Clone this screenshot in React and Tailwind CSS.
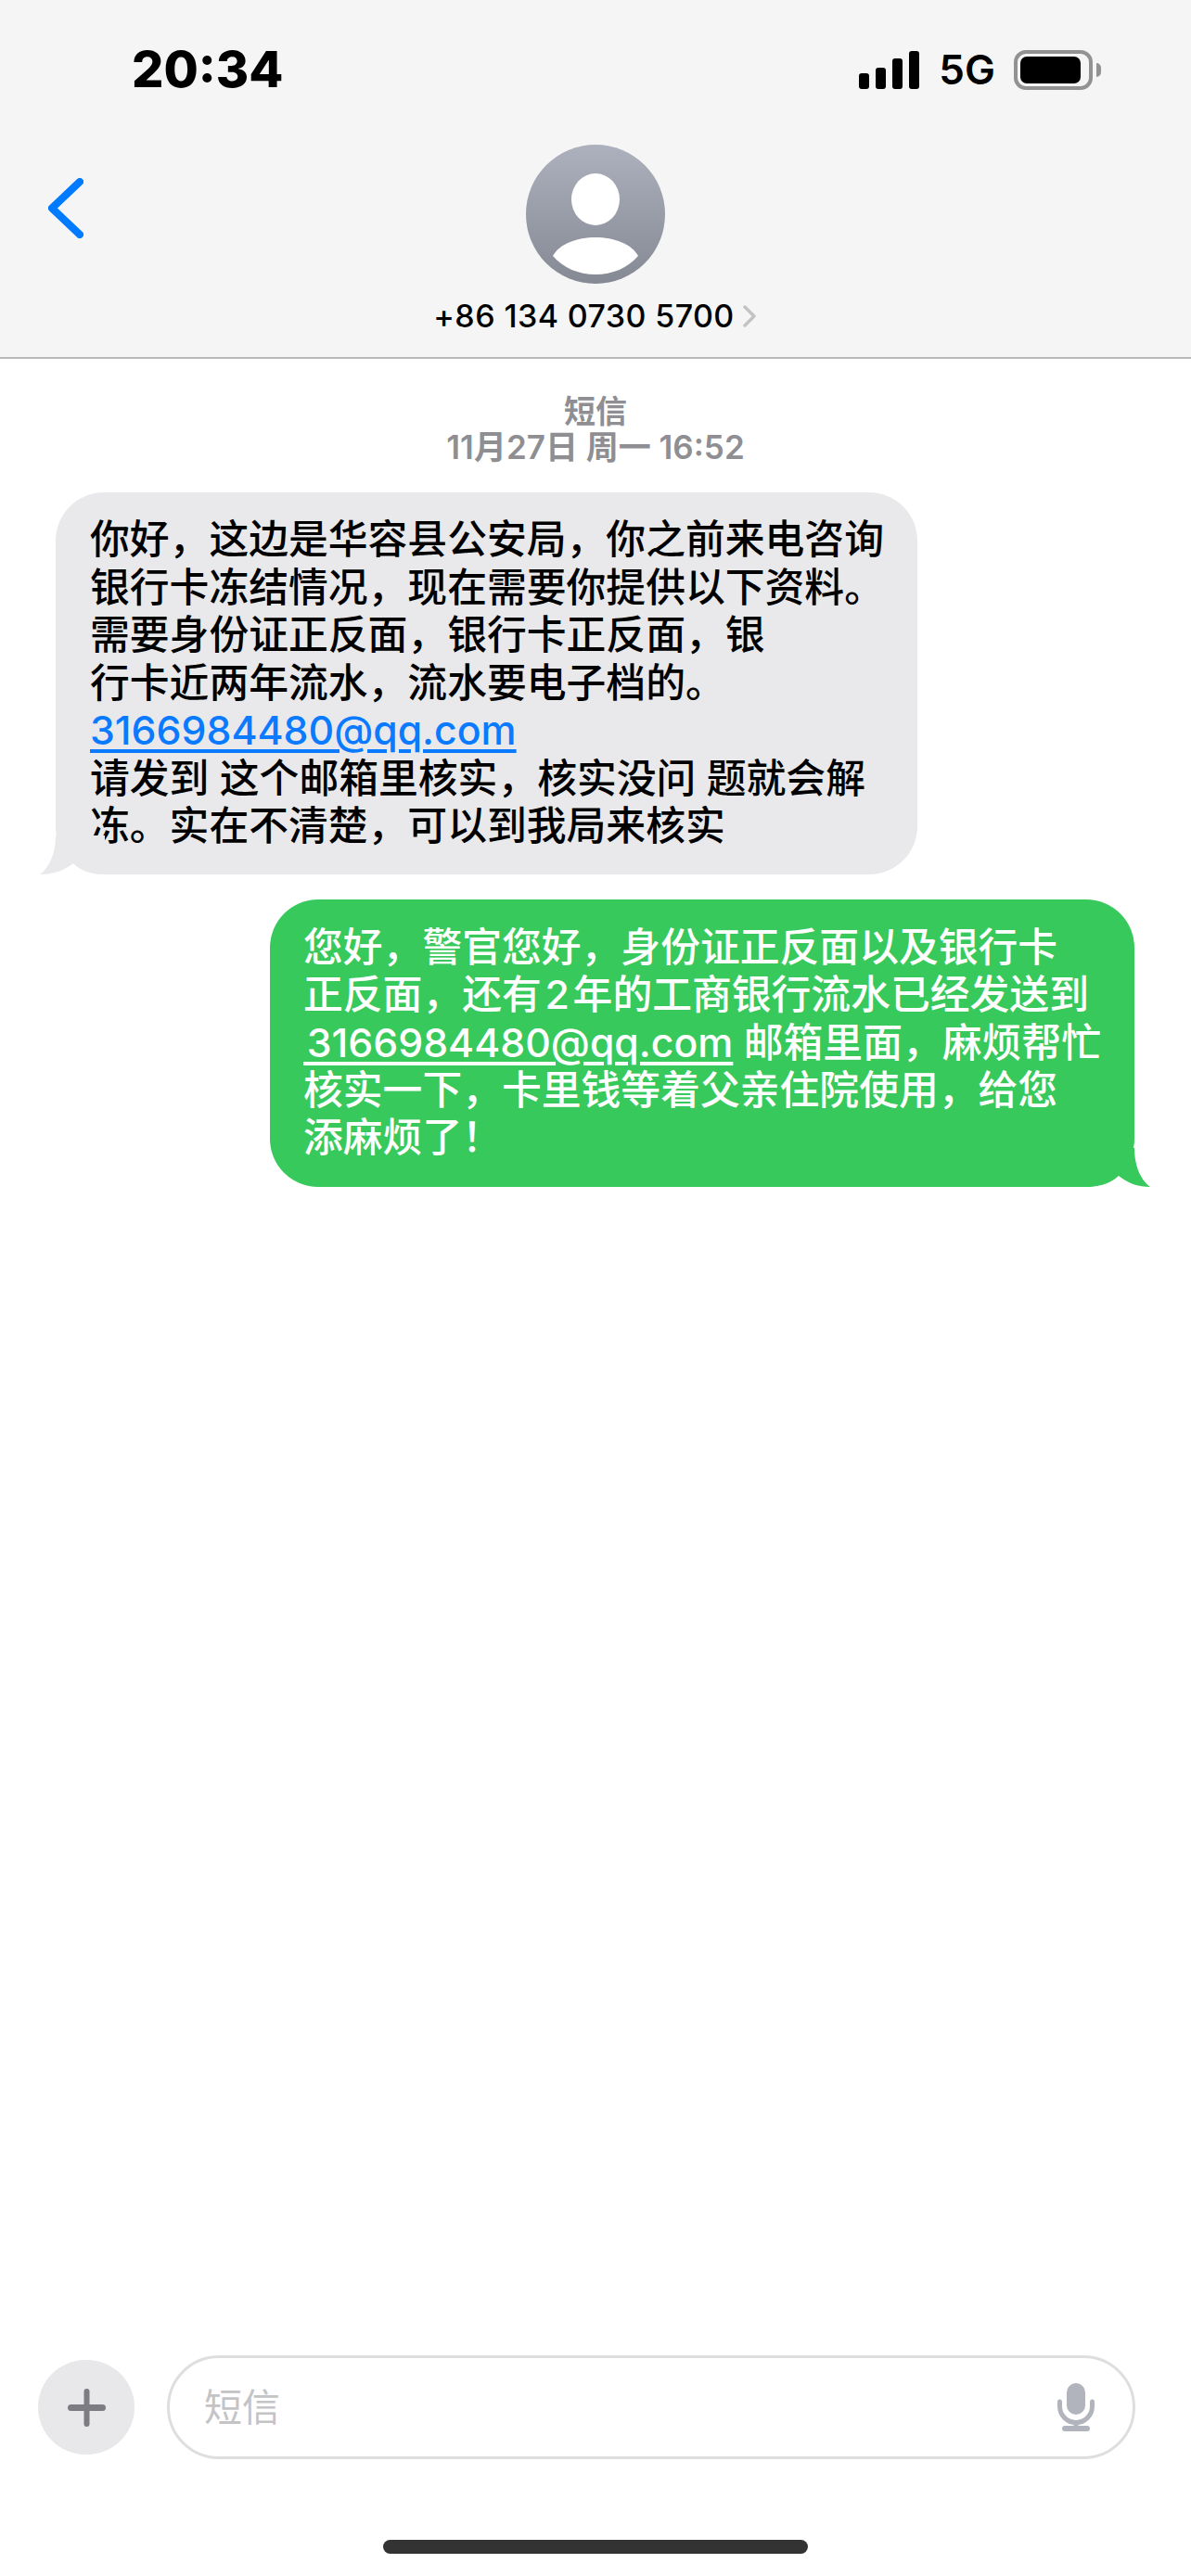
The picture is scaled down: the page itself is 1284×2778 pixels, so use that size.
import React from "react";

const grayLines = [
  "你好，这边是华容县公安局，你之前来电咨询",
  "银行卡冻结情况，现在需要你提供以下资料。",
  "需要身份证正反面，银行卡正反面，银",
  "行卡近两年流水，流水要电子档的。",
];

function StatusBar() {
  return (
    <div className="flex h-[44px] items-center justify-between pl-[142px] pr-[97px]">
      <span className="text-[54px] font-extrabold leading-none text-black">20:34</span>
      <div className="flex items-center">
        {/* Signal */}
        <div className="flex h-[41px] items-end gap-[7px]">
          <div className="h-[17px] w-[11px] rounded-[3px] bg-black" />
          <div className="h-[23px] w-[11px] rounded-[3px] bg-black" />
          <div className="h-[33px] w-[11px] rounded-[3px] bg-black" />
          <div className="h-[41px] w-[11px] rounded-[3px] bg-black" />
        </div>
        <span className="ml-[21px] text-[44px] font-semibold leading-none text-black">5G</span>
        {/* Battery */}
        <div className="ml-[20px] flex h-[43px] w-[85px] items-center rounded-[13px] border-[4px] border-[#929292] pl-[3px]">
          <div className="h-[29px] w-[65px] rounded-[7px] bg-black" />
        </div>
        <div className="ml-[4px] h-[15px] w-[5px] rounded-r-full bg-[#929292]" />
      </div>
    </div>
  );
}

function Avatar() {
  return (
    <svg width="150" height="150" viewBox="0 0 150 150">
      <defs>
        <linearGradient id="avatarFill" x1="0" y1="0" x2="0" y2="1">
          <stop offset="0" stopColor="#adb1bd" />
          <stop offset="1" stopColor="#858994" />
        </linearGradient>
      </defs>
      <circle cx="75" cy="75" r="75" fill="url(#avatarFill)" />
      <ellipse cx="75" cy="59" rx="26" ry="28" fill="#fff" />
      <path d="M29 120 C36 107 55 100 75 100 C95 100 114 107 121 120 C110 133 93 140 75 140 C57 140 40 133 29 120Z" fill="#fff" />
    </svg>
  );
}

function Header() {
  return (
    <header className="h-[387px] shrink-0 border-b-2 border-[#b9b9b9] bg-[#f5f5f5] pt-[53px]">
      <StatusBar />
      <div className="mt-[59px] grid grid-cols-[1fr_auto_1fr]">
        <svg className="ml-[52px] mt-[36px]" width="38" height="65" viewBox="0 0 38 65" fill="none">
          <path d="M34 4 L4 32.5 L34 61" stroke="#007aff" strokeWidth="8" strokeLinecap="round" strokeLinejoin="round" />
        </svg>
        <div className="flex flex-col items-center">
          <Avatar />
          <div className="mt-[15px] flex h-[40px] items-center gap-[8px]">
            <span className="text-[34px] font-medium leading-none tracking-[0.4px] text-black">+86 134 0730 5700</span>
            <svg width="17" height="24" viewBox="0 0 17 24" fill="none">
              <path d="M3 2 L13 12 L3 22" stroke="#c3c3c5" strokeWidth="3.5" strokeLinecap="round" strokeLinejoin="round" />
            </svg>
          </div>
        </div>
        <div />
      </div>
    </header>
  );
}

function GrayBubble() {
  return (
    <div className="relative ml-[60px] mt-[29px] h-[412px] w-[929px] rounded-[52px] bg-[#e9e9eb] pl-[37px] pt-[25px] text-[42.8px] font-medium leading-[51.5px] text-black">
      {grayLines.map((line) => (
        <div key={line} className="whitespace-nowrap">{line}</div>
      ))}
      <div className="whitespace-nowrap text-[#0a7aff] underline decoration-[4px] underline-offset-[5px]">3166984480@qq.com</div>
      <div className="whitespace-nowrap">请发到 这个邮箱里核实，核实没问 题就会解</div>
      <div className="whitespace-nowrap">冻。实在不清楚，可以到我局来核实</div>
      {/* Tail */}
      <svg className="absolute bottom-0 left-[-17px]" width="70" height="42" viewBox="0 0 70 42">
        <path d="M17 0 C17 18 11 34 0 42 C14 42 26 38 36 30 C44 38 54 42 70 42 L70 0Z" fill="#e9e9eb" />
      </svg>
    </div>
  );
}

function GreenBubble() {
  return (
    <div className="relative mr-[61px] mt-[27px] h-[310px] w-[932px] self-end rounded-[52px] bg-[#37c95b] pl-[36px] pt-[26px] text-[42.8px] font-medium leading-[51.3px] text-white">
      <div className="whitespace-nowrap">您好，警官您好，身份证正反面以及银行卡</div>
      <div className="whitespace-pre">{"正反面，还有\u200A2\u200A年的工商银行流水已经发送到"}</div>
      <div className="whitespace-pre">
        <span className="underline decoration-[4px] underline-offset-[5px]">{"\u200A3166984480@qq.com"}</span> 邮箱里面，麻烦帮忙
      </div>
      <div className="whitespace-nowrap">核实一下，卡里钱等着父亲住院使用，给您</div>
      <div className="whitespace-nowrap">添麻烦了！</div>
      {/* Tail */}
      <svg className="absolute bottom-0 right-[-17px]" width="70" height="42" viewBox="0 0 70 42">
        <path d="M53 0 C53 18 59 34 70 42 C56 42 46 38 36 30 C28 38 16 42 0 42 L0 0Z" fill="#37c95b" />
      </svg>
    </div>
  );
}

function Composer() {
  return (
    <div className="flex items-center pl-[41px] pr-[60px]">
      <div className="flex h-[102px] w-[104px] shrink-0 items-center justify-center rounded-full bg-[#e8e8ea]">
        <svg width="41" height="41" viewBox="0 0 41 41">
          <rect x="17.5" y="0" width="6" height="41" rx="3" fill="#7c7c82" />
          <rect x="0" y="17" width="41" height="7" rx="3.5" fill="#7c7c82" />
        </svg>
      </div>
      <div className="ml-[35px] flex h-[112px] flex-1 items-center justify-between rounded-[56px] border-[3px] border-[#dedede] pl-[37px] pr-[41px]">
        <span className="text-[41px] leading-none text-[#c4c4c6]">短信</span>
        <svg width="40" height="52" viewBox="0 0 40 52">
          <rect x="10" y="0" width="20" height="34" rx="10" fill="#b1b4bc" />
          <path d="M2.5 20 V25 A17.5 17.5 0 0 0 37.5 25 V20" fill="none" stroke="#b1b4bc" strokeWidth="5" strokeLinecap="round" />
          <rect x="17.5" y="42" width="5" height="6" fill="#b1b4bc" />
          <rect x="5" y="46" width="30" height="6" rx="3" fill="#b1b4bc" />
        </svg>
      </div>
    </div>
  );
}

export default function App() {
  return (
    <div className="flex h-[2778px] w-[1284px] flex-col bg-white font-[Inter,'Noto_Sans_CJK_SC',sans-serif]">
      <Header />
      <main className="flex flex-1 flex-col">
        <div className="mt-[37px] text-center font-semibold leading-[39px] text-[#8e8e93]">
          <div className="text-[34px]">短信</div>
          <div className="text-[35px]">11月27日 周一 16:52</div>
        </div>
        <GrayBubble />
        <GreenBubble />
      </main>
      <Composer />
      <div className="flex justify-center pb-[24px] pt-[87px]">
        <div className="h-[15px] w-[458px] rounded-full bg-[#333333]" />
      </div>
    </div>
  );
}
